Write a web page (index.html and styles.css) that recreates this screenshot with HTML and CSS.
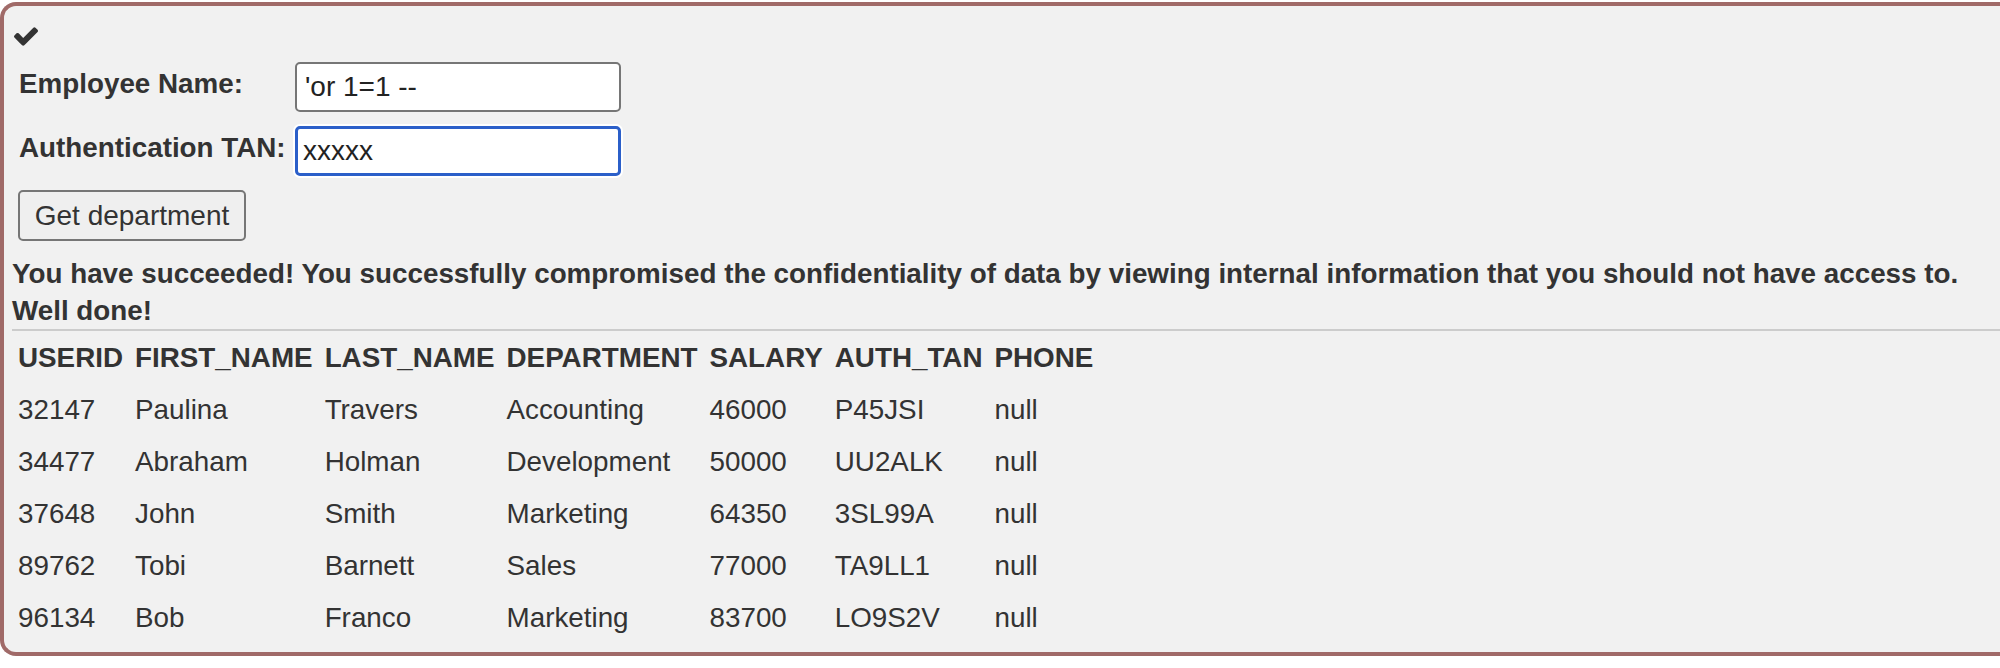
FILE: index.html
```html
<!DOCTYPE html>
<html>
<head>
<meta charset="utf-8">
<link rel="stylesheet" href="styles.css">
</head>
<body>
<div class="panel">
  <svg class="check" viewBox="121 334 1550 1188" width="24" height="19"><path d="M1671 566q0 40-28 68l-724 724-136 136q-28 28-68 28t-68-28l-136-136-362-362q-28-28-28-68t28-68l136-136q28-28 68-28t68 28l294 295 656-657q28-28 68-28t68 28l136 136q28 28 28 68z"/></svg>
  <form class="form">
    <div class="form-row">
      <label class="label">Employee Name:</label>
      <input class="field" type="text" value="'or 1=1 --">
    </div>
    <div class="form-row">
      <label class="label">Authentication TAN:</label>
      <input class="field field-focus" type="text" value="xxxxx">
    </div>
    <button class="btn" type="button">Get department</button>
  </form>
  <div class="feedback">
    <p class="msg">You have succeeded! You successfully compromised the confidentiality of data by viewing internal information that you should not have access to.<br>Well done!</p>
    <hr class="rule">
    <table class="results">
      <tr><th>USERID</th><th>FIRST_NAME</th><th>LAST_NAME</th><th>DEPARTMENT</th><th>SALARY</th><th>AUTH_TAN</th><th>PHONE</th></tr>
      <tr><td>32147</td><td>Paulina</td><td>Travers</td><td>Accounting</td><td>46000</td><td>P45JSI</td><td>null</td></tr>
      <tr><td>34477</td><td>Abraham</td><td>Holman</td><td>Development</td><td>50000</td><td>UU2ALK</td><td>null</td></tr>
      <tr><td>37648</td><td>John</td><td>Smith</td><td>Marketing</td><td>64350</td><td>3SL99A</td><td>null</td></tr>
      <tr><td>89762</td><td>Tobi</td><td>Barnett</td><td>Sales</td><td>77000</td><td>TA9LL1</td><td>null</td></tr>
      <tr><td>96134</td><td>Bob</td><td>Franco</td><td>Marketing</td><td>83700</td><td>LO9S2V</td><td>null</td></tr>
    </table>
  </div>
</div>
</body>
</html>
```
FILE: styles.css
```css
html, body {
  margin: 0;
  padding: 0;
  background: #ffffff;
}
body {
  font-family: "Liberation Sans", Arial, sans-serif;
  font-size: 27.8px;
  color: #333333;
}
.panel {
  margin-top: 2px;
  height: 654px;
  box-sizing: border-box;
  background: #f1f1f1;
  border: 4px solid #a06a68;
  border-right: none;
  border-radius: 16px 0 0 16px;
  padding: 21px 0 0 8px;
}
.check {
  display: block;
  margin-left: 2px;
  fill: #333333;
}
.form {
  margin: 16px 0 0 7px;
  display: flex;
  flex-direction: column;
  align-items: flex-start;
  gap: 14px;
}
.form-row {
  display: flex;
  align-items: flex-start;
}
.label {
  width: 276px;
  font-weight: bold;
  line-height: 32px;
  margin-top: 6px;
}
.field {
  width: 326px;
  height: 50px;
  box-sizing: border-box;
  border: 2px solid #767676;
  border-radius: 5px;
  background: #ffffff;
  font-family: "Liberation Sans", Arial, sans-serif;
  font-size: 28px;
  color: #222222;
  padding: 0 8px;
  margin: 0;
  outline: none;
}
.field-focus {
  border: 3px solid #2b5fc9;
  padding: 0 5px;
  box-shadow: 0 0 0 2px #ffffff;
}
.btn {
  width: 228px;
  height: 51px;
  box-sizing: border-box;
  margin: 0 0 0 -1px;
  border: 2px solid #767676;
  border-radius: 5px;
  background: #efefef;
  font-family: "Liberation Sans", Arial, sans-serif;
  font-size: 28px;
  color: #333333;
  padding: 0 12px;
}
.feedback {
  margin-top: 14px;
}
.msg {
  margin: 0;
  font-weight: bold;
  line-height: 37px;
}
.rule {
  margin: 0;
  border: none;
  height: 2px;
  background: #cccccc;
}
.results {
  border-spacing: 2px;
}
.results th, .results td {
  text-align: left;
  padding: 9px 6px 9px 4px;
  line-height: 32px;
  white-space: nowrap;
}
.results th {
  font-weight: bold;
}
.results td {
  font-weight: normal;
}
```
